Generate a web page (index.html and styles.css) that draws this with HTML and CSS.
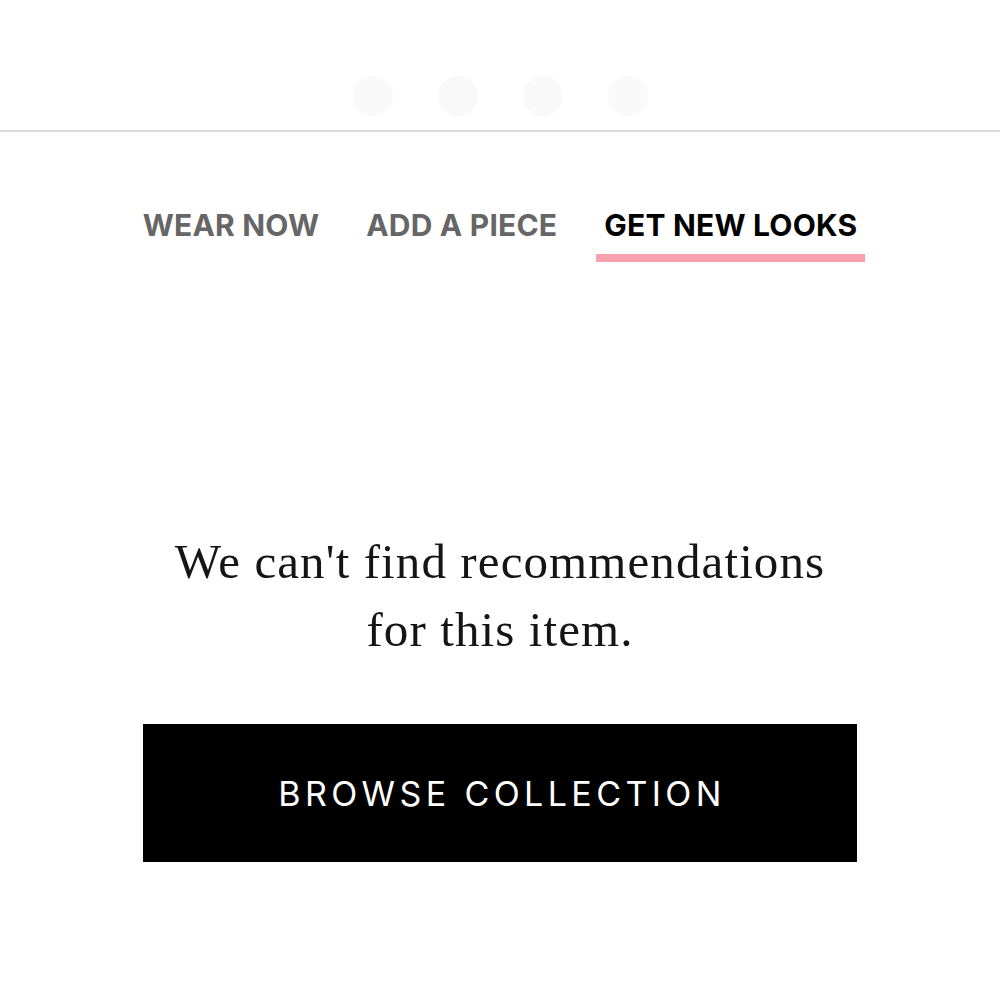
FILE: index.html
```html
<!DOCTYPE html>
<html>
<head>
<meta charset="utf-8">
<link rel="stylesheet" href="styles.css">
</head>
<body>
<header class="topbar">
  <div class="dots">
    <span class="dot"></span>
    <span class="dot"></span>
    <span class="dot"></span>
    <span class="dot"></span>
  </div>
</header>
<nav class="tabs">
  <a class="tab">WEAR NOW</a>
  <a class="tab">ADD A PIECE</a>
  <a class="tab active">GET NEW LOOKS</a>
</nav>
<main class="empty">
  <p class="message">We can't find recommendations<br>for this item.</p>
  <button class="browse">BROWSE COLLECTION</button>
</main>
</body>
</html>
```
FILE: styles.css
```css
html, body {
  margin: 0;
  padding: 0;
  background: #fff;
  width: 1000px;
  height: 1000px;
  overflow: hidden;
}
.topbar {
  height: 130px;
  border-bottom: 2px solid #dcdcdc;
  box-sizing: content-box;
  display: flex;
  justify-content: center;
}
.dots {
  display: flex;
  gap: 45px;
  padding-top: 76px;
}
.dot {
  width: 40px;
  height: 40px;
  border-radius: 50%;
  background: #f9f9f9;
}
.tabs {
  display: flex;
  justify-content: center;
  gap: 47px;
  padding-top: 72px;
  font-family: "Inter", sans-serif;
  font-weight: 700;
  font-size: 30px;
  letter-spacing: 0.2px;
}
.tab {
  color: #666;
  padding: 4px 0 20px;
  line-height: 34px;
}
.tab.active {
  color: #000;
  position: relative;
}
.tab.active::after {
  content: "";
  position: absolute;
  left: -8px;
  right: -8px;
  bottom: 0;
  height: 8px;
  background: #f7a1ae;
}
.empty {
  display: flex;
  flex-direction: column;
  align-items: center;
  padding-top: 266px;
}
.message {
  margin: 0;
  font-family: "Liberation Serif", serif;
  font-weight: 400;
  font-size: 49px;
  line-height: 68px;
  letter-spacing: 1.1px;
  text-align: center;
  color: #151515;
}
.browse {
  margin-top: 60px;
  width: 714px;
  height: 138px;
  background: #000;
  color: #fff;
  border: 0;
  font-family: "Inter", sans-serif;
  font-weight: 400;
  font-size: 34px;
  letter-spacing: 4.4px;
  padding: 0 0 0 4px;
}
```
